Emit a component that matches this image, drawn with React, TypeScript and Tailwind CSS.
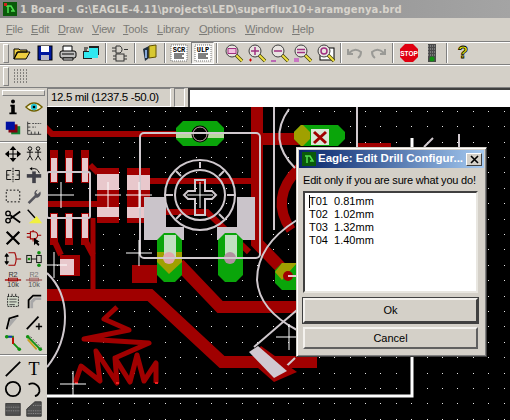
const menus = [
  ["F", "ile", "w-[25px]"],
  ["E", "dit", "w-[27px]"],
  ["D", "raw", "w-[34px]"],
  ["V", "iew", "w-[31px]"],
  ["T", "ools", "w-[34px]"],
  ["L", "ibrary", "w-[42px]"],
  ["O", "ptions", "w-[46px]"],
  ["W", "indow", "w-[47px]"],
  ["H", "elp", "w-[30px]"],
];

const drills = ["T01  0.81mm", "T02  1.02mm", "T03  1.32mm", "T04  1.40mm"];

function Ico({ children, boxed }: { children: React.ReactNode; boxed?: boolean }) {
  return (
    <div className={"flex h-[22px] w-[23px] shrink-0 items-center justify-center " + (boxed ? "bg-[#eeece8] border border-t-[#808080] border-l-[#808080] border-r-white border-b-white" : "")}>
      <svg width="20" height="20" viewBox="0 0 20 20">{children}</svg>
    </div>
  );
}

function Cell({ children }: { children: React.ReactNode }) {
  return (
    <div className="flex items-center justify-center">
      <svg width="18" height="18" viewBox="0 0 20 20">{children}</svg>
    </div>
  );
}

function Sep({ className }: { className: string }) {
  return <div className={"h-[20px] w-[2px] shrink-0 border-l border-r border-l-[#808080] border-r-white " + className} />;
}

function Grip() {
  return <div className="ml-[3px] h-[19px] w-[6px] shrink-0 border border-t-white border-l-white border-r-[#808080] border-b-[#808080]" />;
}

function Mag({ children }: { children?: React.ReactNode }) {
  return (
    <>
      <line x1="12" y1="12" x2="18" y2="18" stroke="#404000" strokeWidth="3.4" />
      <line x1="12" y1="12" x2="18" y2="18" stroke="#f0e040" strokeWidth="2" />
      <circle cx="8" cy="8" r="6" fill="#e8e4e0" stroke="#404040" strokeWidth="1" />
      {children}
    </>
  );
}

function Page({ label }: { label: string }) {
  return (
    <>
      <rect x="2" y="2" width="16" height="16" fill="#fff" stroke="#777" strokeDasharray="1 1" />
      <text x="10" y="9" textAnchor="middle" fontSize="7" fontWeight="700" fontFamily="Liberation Mono, monospace" fill="#000">{label}</text>
      <path d="M5 11h10M5 13h8M5 15h10" stroke="#000" strokeWidth="1" />
    </>
  );
}

function Cross({ x, y, r = 13 }: { x: number; y: number; r?: number }) {
  return <path d={`M${x - r} ${y}H${x + r}M${x} ${y - r}V${y + r}`} stroke="#fff" strokeWidth="1" fill="none" />;
}

function Octagon({ x, y, w, h, fill }: { x: number; y: number; w: number; h: number; fill: string }) {
  const c = 7;
  return <polygon points={`${x + c},${y} ${x + w - c},${y} ${x + w},${y + c} ${x + w},${y + h - c} ${x + w - c},${y + h} ${x + c},${y + h} ${x},${y + h - c} ${x},${y + c}`} fill={fill} />;
}

function Board() {
  const red = "#a00000";
  const green = "#0aa50a";
  const silk = "#d0c9ce";
  const dots = [];
  for (let i = 0; i < 30; i++) {
    for (let j = 0; j < 21; j++) {
      dots.push(<rect key={i + "-" + j} x={Math.round(58 + 15.4 * i)} y={Math.round(110.7 + 15.4 * j)} width="1" height="1" fill="#e8e8e8" />);
    }
  }
  return (
    <svg className="block h-[313px] w-[462px]" viewBox="48 107 462 313">
      {dots}
      <g fill="none" stroke={red} strokeWidth="6">
        <path d="M46 127L53 134H200" />
        <path strokeWidth="12" d="M258 105V243L290 276" />
        <path strokeWidth="12" d="M258 139H300" />
        <path d="M151 181H258" />
        <path d="M48 204H100" />
        <path d="M148 212H208L250 252" />
        <path strokeWidth="12" d="M48 295H151L223 362H318" />
        <path strokeWidth="12" d="M180 264L221 307H300" />
        <path strokeWidth="5" d="M94 218V295" />
        <path strokeWidth="6" d="M91 165L99 173M55 240L62 255M86 240L94 255" />
        <path strokeWidth="10" d="M300 168Q270 198 292 230" />
        <path strokeWidth="6" d="M358 146H392" />
      </g>
      {[51, 66, 82].map((x) => (
        <g key={x}>
          <rect x={x} y="150" width="8" height="33" fill={red} />
          <rect x={x} y="213" width="8" height="32" fill={red} />
          <rect x={x + 1} y="158" width="6" height="24" fill="#e8c8cc" />
          <rect x={x + 1} y="214" width="6" height="24" fill="#e8c8cc" />
        </g>
      ))}
      <rect x="98" y="168" width="22" height="55" fill={red} />
      <rect x="128" y="168" width="23" height="55" fill={red} />
      <rect x="98" y="174" width="22" height="16" fill="#e8c8cc" />
      <rect x="98" y="207" width="22" height="10" fill="#e8c8cc" />
      <rect x="128" y="175" width="23" height="15" fill="#e8c8cc" />
      <rect x="128" y="207" width="23" height="11" fill="#e8c8cc" />
      <rect x="133" y="265" width="25" height="18" fill={red} />
      <rect x="61" y="255" width="20" height="21" fill={red} />
      <rect x="61" y="259" width="14" height="16" fill="#e8c8cc" />

      <Octagon x={177} y={121} w={48} h={25} fill={green} />
      <rect x="177" y="132" width="48" height="6" fill="#b8d8a0" />
      <circle cx="201" cy="134" r="7" fill={red} stroke="#000" strokeWidth="3" />
      <circle cx="201" cy="134" r="7" fill="#000" stroke="#c8a8a8" strokeWidth="1" />

      <polygon points="145,197 167,197 167,227 185,227 185,240 145,240" fill="#cac4ca" />
      <polygon points="238,197 256,197 256,240 218,240 218,227 238,227" fill="#cac4ca" />
      <Octagon x={158} y={233} w={25} h={49} fill={green} />
      <Octagon x={219} y={233} w={25} h={49} fill={green} />
      <polygon points="158,262 170,274 183,262 183,252 158,252" fill="#a0a000" />
      <rect x="165" y="235" width="12" height="24" fill="#c0e0c0" />
      <rect x="226" y="235" width="12" height="24" fill="#c0e0c0" />
      <circle cx="170" cy="258" r="6" fill="#e0a8b0" />
      <circle cx="231" cy="258" r="6" fill="#b090a0" />

      <g fill="none" stroke={silk} strokeWidth="2">
        <rect x="141" y="133" width="120" height="125" rx="4" />
        <rect x="48" y="172" width="43" height="46" rx="2" />
        <circle cx="201" cy="195" r="35" />
        <circle cx="201" cy="195" r="25" />
        <path d="M201 168V162M174 195H167M228 195H235M182 176L177 171M220 176L225 171M182 214L177 219M220 214L225 219" />
        <path d="M196 180H206V191H213L217 195L213 199H206V215H196V199H189L185 195L189 191H196Z" />
        <path d="M290 109Q268 140 296 168" />
        <path d="M275 107V230" />
        <path d="M298 220Q258 245 258 280Q260 310 298 330" />
        <path d="M48 273Q66 290 66 317Q66 345 48 367" />
        <path d="M298 310L255 347" />
        <path d="M275 378L296 358" />
        <path d="M358 107V147" />
        <path d="M425 147L434 138" />
        <path d="M460 134V147" />
      </g>

      <Octagon x={295} y={125} w={51} h={21} fill={green} />
      <Octagon x={295} y={125} w={16} h={21} fill="#a0a000" />
      <rect x="312" y="129" width="18" height="16" fill="#d8e8d8" />
      <path d="M315 132L327 143M327 132L315 143" stroke={red} strokeWidth="3" />

      <Octagon x={276} y={263} w={28} h={27} fill={green} />
      <polygon points="283,263 298,263 290,272 283,280 276,272" fill="#a0a000" />
      <circle cx="289" cy="276" r="5" fill={red} />
      <path d="M289 276H298" stroke="#e8c8cc" strokeWidth="2" />

      <polygon points="262,346 298,372 275,382 250,360" fill={red} />
      <polygon points="250,352 259,346 288,371 275,378" fill="#d0c8d0" />

      <path d="M76 383L82 366L101 381L97 351L118 383L116 358L131 382L138 355L145 381L157 363L157 383M116 358L150 343L85 339L130 330L105 319L118 307" fill="none" stroke="#a00000" strokeWidth="5" strokeLinejoin="round" />
      <rect x="76" y="382" width="3" height="2" fill="#f02020" />
      <rect x="117" y="382" width="3" height="2" fill="#f02020" />
      <rect x="156" y="382" width="3" height="2" fill="#f02020" />

      <path d="M48 396H413V138" fill="none" stroke="#fff" strokeWidth="3" />
      <Cross x={62} y={195} />
      <Cross x={109} y={195} />
      <Cross x={140} y={195} />
      <Cross x={201} y={195} />
      <Cross x={140} y={253} />
      <Cross x={55} y={265} />
      <Cross x={74} y={384} />
      <Cross x={290} y={337} />
    </svg>
  );
}

export default function App() {
  return (
    <div className="relative flex h-[420px] w-[510px] flex-col overflow-hidden bg-[#d4d0c8] font-['Liberation_Sans',sans-serif] text-[11px] text-black">
      <div className="flex h-[18px] shrink-0 items-center bg-gradient-to-r from-[#808080] to-[#a4a4a4] pl-[3px]">
        <svg width="14" height="14" viewBox="0 0 14 14" className="shrink-0">
          <rect width="14" height="14" fill="#0a5a0a" />
          <path d="M3 4H8L11 9H8M5 4V11" stroke="#50e050" strokeWidth="1.5" fill="none" />
          <rect x="1" y="1" width="3" height="3" fill="#d02020" />
        </svg>
        <span className="ml-[3px] whitespace-nowrap font-['DejaVu_Sans',sans-serif] text-[10px] font-bold tracking-[0.1px] text-[#d8d4cc]">1 Board - G:\EAGLE-4.11\projects\LED\superflux10+aramgenya.brd</span>
      </div>

      <div className="flex h-[23px] shrink-0 items-center pl-[6px] tracking-[-0.2px] text-[#7a7a76]">
        {menus.map(([a, b, w]) => (
          <div key={a} className={w + " shrink-0 whitespace-nowrap"}><span className="underline">{a}</span>{b}</div>
        ))}
      </div>

      <div className="flex h-[23px] shrink-0 items-center border-t border-t-[#808080] shadow-[inset_0_1px_0_#fff]">
        <Grip />
        <div className="ml-px flex items-center">
          <Ico><path d="M2 16V6H7L8 7H15V9H6L2 16L5 9H18L14 16Z" fill="#f0d040" stroke="#000" /></Ico>
          <Ico><rect x="3" y="3" width="14" height="14" fill="#0018a0" stroke="#000" /><rect x="6" y="3" width="8" height="6" fill="#fff" /><rect x="6" y="12" width="8" height="5" fill="#b8b8c8" /></Ico>
          <Ico><path d="M5 8V3H14V8" fill="#fff" stroke="#000" /><rect x="2" y="8" width="16" height="7" rx="2" fill="#c0c0c0" stroke="#000" /><path d="M5 15H15V17H5Z" fill="#fff" stroke="#000" /><path d="M4 11H16" stroke="#000" /></Ico>
          <Ico><rect x="2" y="8" width="9" height="8" fill="#202020" strokeDasharray="1" /><rect x="8" y="3" width="10" height="9" fill="#202020" /><rect x="3" y="9" width="14" height="6" fill="#30e8f0" /><rect x="8" y="5" width="9" height="5" fill="#30e8f0" /><path d="M3 5H7M3 7H6" stroke="#000" /></Ico>
        </div>
        <Sep className="ml-[3px] mr-[1px]" />
        <Ico><path d="M6 3H10A4 4 0 0 1 10 10H6ZM2 5H6M2 8H6M14 6.5H18" fill="none" stroke="#333" /><rect x="6" y="11" width="8" height="7" fill="none" stroke="#333" /><path d="M3 13H6M3 16H6M14 13H17M14 16H17" stroke="#333" /></Ico>
        <Sep className="ml-[3px] mr-[2px]" />
        <Ico><path d="M3 6L9 3V15L5 18Z" fill="#203040" /><path d="M9 3L16 2V14L9 15Z" fill="#d8c830" stroke="#605000" /><path d="M6 7V15" stroke="#88a8d8" strokeWidth="2" /></Ico>
        <Sep className="ml-[3px] mr-[1px]" />
        <Ico><Page label="SCR" /></Ico>
        <div className="ml-px"><Ico boxed><Page label="ULP" /></Ico></div>
        <Sep className="ml-[2px] mr-[4px]" />
        <Ico><Mag><rect x="4" y="5.5" width="8" height="5" fill="#f0c0e0" stroke="#a03080" /></Mag></Ico>
        <Ico><Mag><path d="M8 4V12M4 8H12" stroke="#a03080" strokeWidth="1.5" /><path d="M2 17H5M3.5 15.5V18.5" stroke="#d00000" /></Mag></Ico>
        <Ico><Mag><path d="M4 8H12" stroke="#a03080" strokeWidth="1.5" /><path d="M1 18H6" stroke="#a000a0" /></Mag></Ico>
        <Ico><Mag><path d="M4 6.5H12M4 9.5H12" stroke="#a03080" strokeWidth="1.5" /><path d="M1 16H6M1 18H6" stroke="#c020c0" /></Mag></Ico>
        <Ico><rect x="4" y="5" width="14" height="12" fill="#fff" stroke="#000" /><Mag><circle cx="8" cy="8" r="3" fill="none" stroke="#a03080" strokeWidth="1.5" /></Mag></Ico>
        <Sep className="ml-[3px] mr-[1px]" />
        <Ico><path d="M3 6V11H8M4 10Q10 4 16 9Q16 13 13 15" fill="none" stroke="#9a9a96" strokeWidth="2" /></Ico>
        <Ico><path d="M17 6V11H12M16 10Q10 4 4 9Q4 13 7 15" fill="none" stroke="#9a9a96" strokeWidth="2" /></Ico>
        <Sep className="ml-[3px] mr-[3px]" />
        <Ico>
          <polygon points="6,1 14,1 19,6 19,14 14,19 6,19 1,14 1,6" fill="#e00010" />
          <text x="10" y="12.5" textAnchor="middle" fontSize="6.5" fontWeight="700" fontFamily="Liberation Sans, sans-serif" fill="#fff">STOP</text>
        </Ico>
        <Ico><rect x="6" y="1" width="8" height="18" fill="#4a4a4a" /><path d="M6 3H14M6 6H14M6 9H14M6 12H14" stroke="#aaa" strokeDasharray="1 1" /><circle cx="10" cy="16" r="2.5" fill="#109010" /></Ico>
        <Sep className="ml-[3px] mr-[3px]" />
        <Ico><text x="10" y="15" textAnchor="middle" fontSize="17" fontWeight="700" fontFamily="Liberation Sans, sans-serif" fill="#f0f000" stroke="#000" strokeWidth="0.8">?</text></Ico>
      </div>

      <div className="flex h-[23px] shrink-0 items-center border-t border-t-[#808080] shadow-[inset_0_1px_0_#fff]">
        <Grip />
        <svg width="16" height="16" viewBox="0 0 16 16" className="ml-[3px]">
          <path d="M2 2H15M2 5H15M2 8H15M2 11H15M2 14H15" stroke="#333" strokeDasharray="1 2" />
        </svg>
      </div>

      <div className="flex min-h-0 flex-1 border-t border-t-[#808080]">
        <div className="flex w-[47px] shrink-0 flex-col">
          <div className="mx-[2px] mt-[2px] h-[6px] border border-t-white border-l-white border-r-[#808080] border-b-[#808080]" />
          <div className="grid auto-rows-[21px] grid-cols-2 px-[2px]">
            <Cell><circle cx="10" cy="4" r="2.2" fill="#000" /><path d="M7 7.5H12V16H14V18H6V16H8V9.5H7Z" fill="#000" /></Cell>
            <Cell><path d="M1 10Q10 1 19 10Q10 19 1 10Z" fill="#f4f0d0" stroke="#706000" strokeWidth="1.5" /><circle cx="10" cy="10" r="3.5" fill="#20c0d0" /><circle cx="10" cy="10" r="1.5" fill="#000" /></Cell>
            <Cell><rect x="8" y="8" width="10" height="9" fill="#108030" /><rect x="5" y="6" width="10" height="9" fill="#800010" /><rect x="2" y="3" width="10" height="9" fill="#0010a0" /></Cell>
            <Cell><path d="M3 3V17H18M3 13H6M3 9H6M3 5H6M7 17V14M11 17V14M15 17V14" stroke="#333" fill="none" /><path d="M8 5H18M8 9H12" stroke="#444" strokeDasharray="2 1" /></Cell>
          </div>
          <div className="mt-[3px] h-[2px] border-t border-b border-t-[#808080] border-b-white" />
          <div className="grid auto-rows-[21px] grid-cols-2 px-[2px]">
            <Cell><path d="M10 2V18M2 10H18M10 2L7.5 5H12.5ZM10 18L7.5 15H12.5ZM2 10L5 7.5V12.5ZM18 10L15 7.5V12.5Z" stroke="#000" strokeWidth="1.2" fill="#000" /></Cell>
            <Cell><circle cx="5.5" cy="4" r="2" fill="none" stroke="#000" /><circle cx="14.5" cy="4" r="2" fill="none" stroke="#000" /><path d="M5.5 6V12L2.5 17M5.5 12L8.5 17M2 8H9M14.5 6V12L11.5 17M14.5 12L17.5 17M11 8H18" stroke="#000" fill="none" /></Cell>
            <Cell><path d="M10 2V18" stroke="#000" strokeDasharray="2 1" /><path d="M8 5H3V15H8M3 10H6M12 5H17V15H12M17 10H14" stroke="#000" fill="none" /></Cell>
            <Cell><rect x="2" y="9" width="16" height="4" fill="#404048" /><rect x="8" y="6" width="4" height="13" fill="#404048" /><path d="M8 3Q14 2 16 8" stroke="#000" fill="none" /><path d="M8 1L5 3L8 5Z" fill="#000" /></Cell>
            <Cell><rect x="2.5" y="3.5" width="15" height="13" fill="none" stroke="#000" strokeDasharray="2 2" /></Cell>
            <Cell><path d="M3 17L11 9A4 4 0 0 1 14 3L12 6L14 8L17 5A5 5 0 0 1 12 12L5 19Z" fill="#55555c" /></Cell>
            <Cell><path d="M18 4L7 12M18 16L7 8" stroke="#000" strokeWidth="2" /><circle cx="4.5" cy="6" r="2.5" fill="none" stroke="#000" strokeWidth="1.5" /><circle cx="4.5" cy="14" r="2.5" fill="none" stroke="#000" strokeWidth="1.5" /></Cell>
            <Cell><path d="M3 2L13 13" stroke="#000" strokeWidth="1.5" /><path d="M9 13L13 9L19 17H4Z" fill="#f0f040" /></Cell>
            <Cell><path d="M3 3L17 17M17 3L3 17" stroke="#000" strokeWidth="2.5" /></Cell>
            <Cell><path d="M6 3H10A4 4 0 0 1 10 11H6ZM2 5H6M2 9H6M14 7H18M9 3V1M9 11V14" fill="none" stroke="#a00000" strokeWidth="1.2" /><path d="M10 10L10 18L12 16L15 19L16 17L14 15L16 14Z" fill="#000" /></Cell>
            <Cell><path d="M3 5V15M3 4L1 7H5ZM3 16L1 13H5Z" fill="#000" stroke="#000" /><path d="M8 3H12Q15 10 12 17H8M13 10H19M5 3H8M5 17H8" fill="none" stroke="#a00000" strokeWidth="1.2" /></Cell>
            <Cell><rect x="2" y="6" width="5" height="8" fill="none" stroke="#000" /><rect x="13" y="6" width="5" height="8" fill="none" stroke="#000" /><path d="M7 10H13" stroke="#000" /><circle cx="15.5" cy="3" r="2" fill="#109010" /><circle cx="15.5" cy="17" r="2" fill="#109010" /><circle cx="4.5" cy="10" r="1.5" fill="#109010" /></Cell>
            <Cell><text x="10" y="7" textAnchor="middle" fontSize="8" fontFamily="Liberation Sans, sans-serif" fill="#333">R2</text><path d="M1 10H19" stroke="#a00000" strokeWidth="1.5" /><rect x="5" y="8" width="10" height="3" fill="none" stroke="#a00000" /><text x="10" y="18" textAnchor="middle" fontSize="8" fontFamily="Liberation Sans, sans-serif" fill="#333">10k</text></Cell>
            <Cell><text x="10" y="7" textAnchor="middle" fontSize="8" fontFamily="Liberation Sans, sans-serif" fill="#777">R2</text><path d="M1 10H19" stroke="#a06060" strokeWidth="1.5" /><rect x="5" y="8" width="10" height="3" fill="none" stroke="#a06060" /><text x="10" y="18" textAnchor="middle" fontSize="8" fontFamily="Liberation Sans, sans-serif" fill="#555">10k</text></Cell>
            <Cell><rect x="4" y="5" width="12" height="11" fill="#d0d8c8" stroke="#222" strokeDasharray="2 1" /><path d="M6 8H14M6 11H14M6 14H12" stroke="#444" /><path d="M5 2V5M9 2V5M13 2V5" stroke="#222" /></Cell>
            <Cell><path d="M4 18V9L9 4H18" fill="none" stroke="#000" strokeWidth="2" /><path d="M6 18V10L10 6H18V9H12L9 12V18Z" fill="#a8a8a8" /></Cell>
            <Cell><path d="M3 18L6 6L16 3" fill="none" stroke="#000" strokeWidth="2" /><path d="M5 17L7 7L15 5Z" fill="#a8a8a8" /></Cell>
            <Cell><path d="M2 18L15 4" stroke="#000" strokeWidth="2" /><path d="M12 15H19M15.5 11.5V18.5" stroke="#000" strokeWidth="1.5" /></Cell>
            <Cell><path d="M3 3H10V10L17 17" fill="none" stroke="#109010" strokeWidth="2" /><path d="M3 3H9" stroke="#1030c0" strokeWidth="2" /><path d="M10 4V11" stroke="#d00000" strokeWidth="2" /><circle cx="3" cy="3" r="2" fill="#109010" /><circle cx="17" cy="17" r="2" fill="#109010" /></Cell>
            <Cell><path d="M3 3L17 17" stroke="#109010" strokeWidth="2" /><path d="M6 3L18 15" stroke="#303030" strokeDasharray="2 2" /><path d="M3 6L13 17" stroke="#c8a020" strokeWidth="2" /><circle cx="3" cy="3" r="2" fill="#109010" /><circle cx="17" cy="17" r="2" fill="#109010" /></Cell>
          </div>
          <div className="mt-px h-[2px] border-t border-b border-t-[#808080] border-b-white" />
          <div className="mt-[3px] grid auto-rows-[20px] grid-cols-2 px-[2px]">
            <Cell><path d="M2 18L18 2" stroke="#000" strokeWidth="2" /></Cell>
            <Cell><text x="10" y="17" textAnchor="middle" fontSize="20" fontFamily="Liberation Serif, serif" fill="#000">T</text></Cell>
            <Cell><circle cx="10" cy="10" r="8" fill="none" stroke="#000" strokeWidth="2" /></Cell>
            <Cell><path d="M4 5A8 8 0 0 1 16 13Q15 17 11 18" fill="none" stroke="#000" strokeWidth="2" /></Cell>
            <Cell><rect x="2" y="4" width="16" height="13" fill="#505050" stroke="#333" /><path d="M2 8H18M2 12H18" stroke="#999" strokeDasharray="1 1" /></Cell>
            <Cell><polygon points="2,18 2,10 11,2 18,2 18,18" fill="#505050" stroke="#333" /><path d="M3 12H18M3 15H18M9 6H18" stroke="#999" strokeDasharray="1 1" /></Cell>
          </div>
        </div>

        <div className="flex min-w-0 flex-1 flex-col">
          <div className="flex h-[19px] shrink-0 items-stretch">
            <div className="flex w-[124px] shrink-0 items-center whitespace-nowrap border border-t-[#808080] border-l-[#808080] border-r-white border-b-white pl-[3px] text-[11.5px] tracking-[-0.35px]">12.5 mil (1237.5 -50.0)</div>
            <div className="ml-[3px] w-[11px] shrink-0 border border-t-[#808080] border-l-[#808080] border-r-white border-b-white" />
            <div className="ml-[3px] flex-1 border-t-2 border-l-2 border-t-[#404040] border-l-[#404040] bg-white" />
          </div>
          <div className="min-h-0 flex-1 bg-black">
            <Board />
          </div>
        </div>
      </div>

      <div className="absolute left-[296px] top-[147px] flex h-[210px] w-[191px] flex-col border border-t-[#d4d0c8] border-l-[#d4d0c8] border-r-[#404040] border-b-[#404040] bg-[#d4d0c8] p-[2px] shadow-[inset_1px_1px_0_#fff,inset_-1px_-1px_0_#808080]">
        <div className="flex h-[18px] shrink-0 items-center bg-gradient-to-r from-[#0a246a] to-[#a6caf0] pl-[3px]">
          <svg width="14" height="14" viewBox="0 0 14 14" className="shrink-0">
            <rect width="14" height="14" fill="#0a5a0a" />
            <path d="M3 4H8L11 9H8M5 4V11" stroke="#50e050" strokeWidth="1.5" fill="none" />
          </svg>
          <span className="ml-[2px] flex-1 whitespace-nowrap text-[11.5px] font-bold text-white">Eagle: Edit Drill Configur...</span>
          <div className="mr-[2px] flex h-[13px] w-[16px] items-center justify-center border border-t-white border-l-white border-r-[#404040] border-b-[#404040] bg-[#d4d0c8]">
            <svg width="9" height="9" viewBox="0 0 9 9"><path d="M1 1L8 8M8 1L1 8" stroke="#000" strokeWidth="1.6" /></svg>
          </div>
        </div>
        <div className="ml-[4px] mt-[5px] h-[15px] shrink-0 whitespace-nowrap text-[11px] leading-[15px] tracking-[-0.2px]">Edit only if you are sure what you do!</div>
        <div className="ml-[4px] mr-[6px] mt-[3px] h-[102px] shrink-0 border-2 border-t-[#404040] border-l-[#404040] border-r-[#e8e6e0] border-b-[#e8e6e0] bg-white pl-[4px] pt-[2px]">
          {drills.map((d, i) => (
            <div key={d} className="relative whitespace-pre text-[11px] leading-[13px]">
              {i === 0 && <span className="absolute left-0 top-0 h-[13px] w-px bg-black" />}
              {d}
            </div>
          ))}
        </div>
        <button className="ml-[4px] mr-[6px] mt-[5px] h-[25px] shrink-0 border-2 border-t-[#f4f2ee] border-l-[#f4f2ee] border-r-[#404040] border-b-[#404040] text-[11px] outline outline-1 outline-[#404040]">Ok</button>
        <button className="ml-[4px] mr-[6px] mt-[4px] h-[22px] shrink-0 border-2 border-t-[#f4f2ee] border-l-[#f4f2ee] border-r-[#606060] border-b-[#606060] text-[11px]">Cancel</button>
      </div>
    </div>
  );
}
